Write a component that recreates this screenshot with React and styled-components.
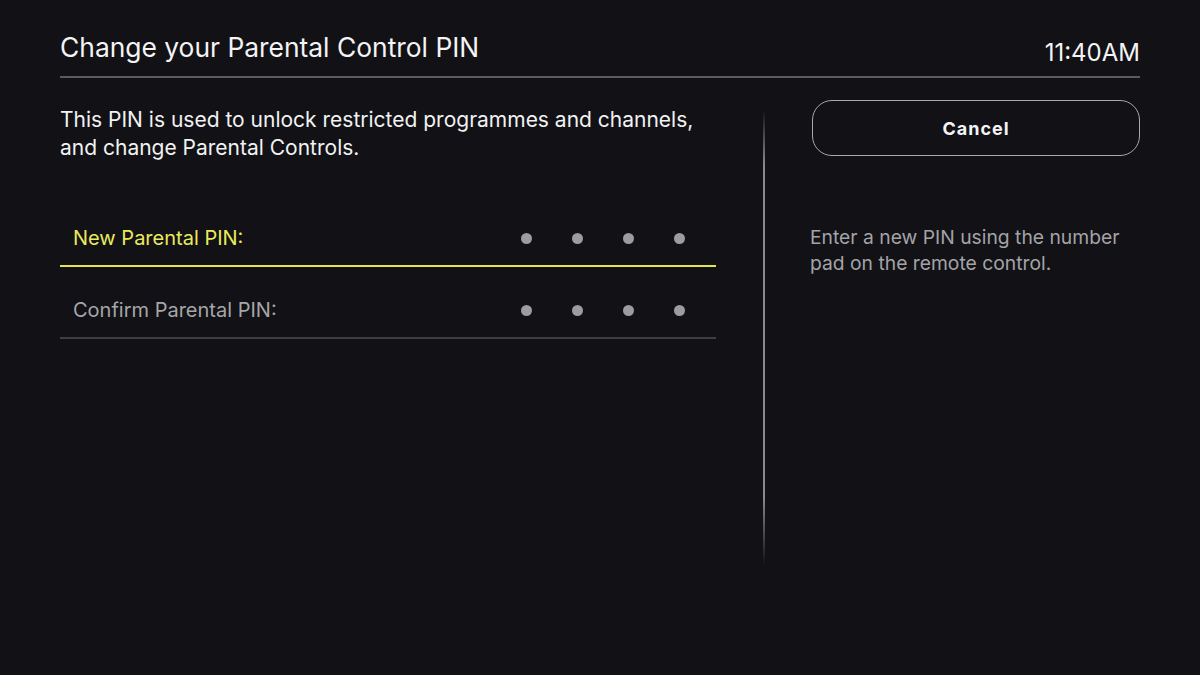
import styled, { createGlobalStyle } from "styled-components";

const GlobalStyle = createGlobalStyle`
  html, body {
    margin: 0;
    padding: 0;
    background: #111116;
  }
  body {
    font-family: Inter, "Noto Sans", sans-serif;
    color: #f2f2f2;
  }
`;

const pins = [
  { label: "New Parental PIN:", active: true },
  { label: "Confirm Parental PIN:", active: false },
];

const App = () => {
  return (
    <>
      <GlobalStyle />
      <Screen>
        <Header>
          <Title>Change your Parental Control PIN</Title>
          <Clock>11:40AM</Clock>
        </Header>
        <Body>
          <Main>
            <Intro>
              This PIN is used to unlock restricted programmes and channels,
              <br />
              and change Parental Controls.
            </Intro>
            <PinList>
              {pins.map((p) => (
                <PinRow key={p.label} $active={p.active}>
                  <PinLabel $active={p.active}>{p.label}</PinLabel>
                  <Dots>
                    {[0, 1, 2, 3].map((i) => (
                      <Dot key={i} />
                    ))}
                  </Dots>
                </PinRow>
              ))}
            </PinList>
          </Main>
          <Divider />
          <Side>
            <CancelButton>Cancel</CancelButton>
            <Help>
              Enter a new PIN using the number
              <br />
              pad on the remote control.
            </Help>
          </Side>
        </Body>
      </Screen>
    </>
  );
};

const Screen = styled.div`
  width: 1200px;
  height: 675px;
  padding: 0 60px;
  box-sizing: border-box;
  overflow: hidden;
`;

const Header = styled.header`
  height: 78px;
  box-sizing: border-box;
  border-bottom: 2px solid #5c5c60;
  display: flex;
  justify-content: space-between;
  align-items: flex-start;
`;

const Title = styled.h1`
  margin: 0;
  padding-top: 31px;
  font-size: 26.4px;
  line-height: 32px;
  font-weight: 400;
  color: #f4f4f4;
`;

const Clock = styled.div`
  padding-top: 37px;
  font-size: 24px;
  line-height: 32px;
  font-weight: 400;
  color: #f4f4f4;
`;

const Body = styled.div`
  display: grid;
  grid-template-columns: 656px 2px 1fr;
  column-gap: 47px;
`;

const Main = styled.section`
  display: flex;
  flex-direction: column;
`;

const Intro = styled.p`
  margin: 28px 0 0;
  font-size: 21px;
  line-height: 28px;
  color: #f2f2f2;
`;

const PinList = styled.div`
  margin-top: 33px;
  display: flex;
  flex-direction: column;
`;

const PinRow = styled.div`
  height: 72px;
  box-sizing: border-box;
  padding: 16px 31px 0 13px;
  display: flex;
  align-items: center;
  justify-content: space-between;
  border-bottom: 2px solid ${(p) => (p.$active ? "#e4e451" : "#3e3e42")};
`;

const PinLabel = styled.span`
  font-size: 20px;
  color: ${(p) => (p.$active ? "#eaea5c" : "#a6a6a8")};
`;

const Dots = styled.div`
  display: flex;
  gap: 40px;
`;

const Dot = styled.span`
  width: 11px;
  height: 11px;
  border-radius: 50%;
  background: #9d9d9f;
`;

const Divider = styled.div`
  margin-top: 32px;
  height: 455px;
  background: linear-gradient(
    to bottom,
    rgba(150, 150, 155, 0) 0%,
    rgba(150, 150, 155, 0.9) 12%,
    rgba(150, 150, 155, 0.9) 85%,
    rgba(150, 150, 155, 0) 100%
  );
`;

const Side = styled.aside`
  display: flex;
  flex-direction: column;
`;

const CancelButton = styled.button`
  margin-top: 22px;
  height: 56px;
  border: 1px solid #a8a8ac;
  border-radius: 20px;
  background: transparent;
  color: #f4f4f4;
  font-family: Inter, "Noto Sans", sans-serif;
  font-size: 18px;
  font-weight: 700;
  letter-spacing: 1px;
  cursor: pointer;
`;

const Help = styled.p`
  margin: 68px 0 0 -2px;
  font-size: 19.3px;
  line-height: 26px;
  color: #a4a4a6;
`;

export default App;
